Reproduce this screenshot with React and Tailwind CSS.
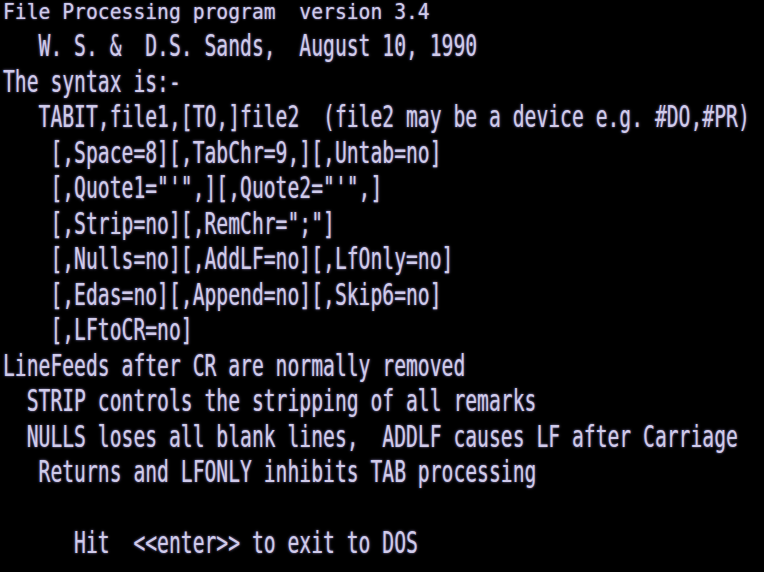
import React from "react";

const lines = [
  "File Processing program  version 3.4",
  "   W. S. &  D.S. Sands,  August 10, 1990",
  "The syntax is:-",
  "   TABIT,file1,[TO,]file2  (file2 may be a device e.g. #DO,#PR)",
  "    [,Space=8][,TabChr=9,][,Untab=no]",
  "    [,Quote1=\"'\",][,Quote2=\"'\",]",
  "    [,Strip=no][,RemChr=\";\"]",
  "    [,Nulls=no][,AddLF=no][,LfOnly=no]",
  "    [,Edas=no][,Append=no][,Skip6=no]",
  "    [,LFtoCR=no]",
  "LineFeeds after CR are normally removed",
  "  STRIP controls the stripping of all remarks",
  "  NULLS loses all blank lines,  ADDLF causes LF after Carriage",
  "   Returns and LFONLY inhibits TAB processing",
  "",
  "      Hit  <<enter>> to exit to DOS",
];

export default function App() {
  return (
    <div className="w-[764px] h-[572px] bg-black overflow-hidden">
      <div className="-mt-[6px] pl-[3px] font-['DejaVu_Sans_Mono',monospace] text-[19.7px] text-[#d0cbea] [text-shadow:0_0_2px_rgba(180,170,240,0.8)]">
        {lines.map((t, i) => (
          <div key={i} className="h-[35.5px] flex items-center whitespace-pre">
            <span
              className={
                i === 0
                  ? "inline-block leading-none scale-y-[1.1]"
                  : "inline-block leading-none scale-y-[1.5]"
              }
            >
              {t || "\u00a0"}
            </span>
          </div>
        ))}
      </div>
    </div>
  );
}
